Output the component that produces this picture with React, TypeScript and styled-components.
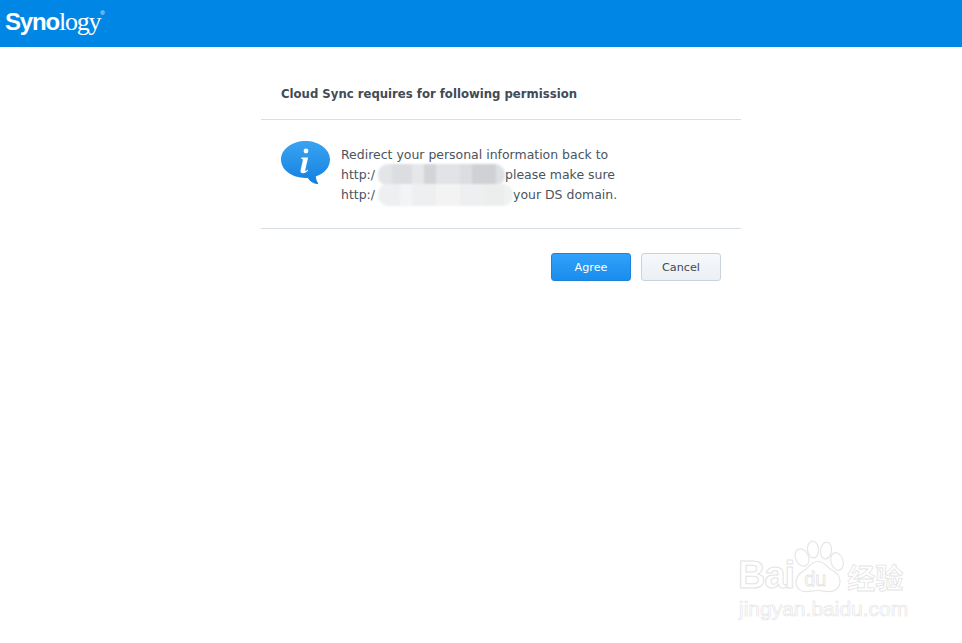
import React from "react";
import styled, { createGlobalStyle } from "styled-components";

const GlobalStyle = createGlobalStyle`
  html, body { margin: 0; padding: 0; background: #fff; }
  body { font-family: "DejaVu Sans", Verdana, sans-serif; overflow: hidden; }
`;

const smudgeTop = [
  ["#e4e5e8", 14], ["#dcdde1", 20], ["#e6e7e9", 12], ["#d3d4d7", 12], ["#e2e3e6", 24], ["#dcdde0", 12], ["#d0d1d4", 24], ["#dfe0e3", 9],
] as const;
const smudgeBottom = [
  ["#eeeff1", 22], ["#f3f4f5", 12], ["#eeeff1", 24], ["#f3f3f4", 24], ["#eeeff1", 24], ["#eceded", 20], ["#f0f1f2", 9],
] as const;

const InfoIcon = () => (
  <svg width="49" height="44" viewBox="0 0 49 44">
    <defs>
      <linearGradient id="bubble" x1="0" y1="0" x2="0" y2="1">
        <stop offset="0" stopColor="#3aa4f2" />
        <stop offset="1" stopColor="#1380df" />
      </linearGradient>
    </defs>
    <path
      d="M24.5 0C11 0 0 8.2 0 18.6 0 29 11 37 24.5 37c.8 0 1.6 0 2.4-.1 1.6 2.6 4.4 5.4 9.4 6.2.8.1 1.2-.6.7-1.2-1.3-1.6-2-3.6-2.1-6.6C43 33 49 26.5 49 18.6 49 8.2 38 0 24.5 0Z"
      fill="url(#bubble)"
    />
    <circle cx="25" cy="10" r="2.4" fill="#fff" />
    <path
      d="M20.5 16.5h6.6l-2.8 12.6c-.2.9.4 1.1 1 .6l1.4-1.1.5.6c-1.5 1.8-3.2 3-5.2 3-2 0-2.8-1.2-2.4-3l2.2-10c.2-1-.2-1.3-1.6-1.5Z"
      fill="#fff"
    />
  </svg>
);

const Paw = () => (
  <svg viewBox="0 0 52 53" fill="#fff" stroke="#e6e6e6" strokeWidth="1.2">
    <ellipse cx="9" cy="17" rx="6.5" ry="9" transform="rotate(-25 9 17)" />
    <ellipse cx="20" cy="9" rx="5.5" ry="8.5" transform="rotate(-6 20 9)" />
    <ellipse cx="33" cy="10" rx="5.5" ry="8.5" transform="rotate(8 33 10)" />
    <ellipse cx="44" cy="21" rx="6" ry="9" transform="rotate(-18 44 21)" />
    <path d="M25 21c6 0 8 5 13 8 6 3 9 7 9 12 0 7-6 11-13 10-4-.5-6-1-9-1s-6 .5-10 1c-7 1-12-3-12-9 0-5 3-9 8-12 5-3 7-9 14-9Z" />
  </svg>
);

export default function App() {
  return (
    <Page>
      <GlobalStyle />
      <TopBar>
        <Logo>
          <LogoBold>Syno</LogoBold>
          <LogoLight>logy</LogoLight>
          <LogoMark>®</LogoMark>
        </Logo>
      </TopBar>
      <Dialog>
        <DialogTitle>Cloud Sync requires for following permission</DialogTitle>
        <DialogBody>
          <InfoIcon />
          <Message>
            <Line>Redirect your personal information back to</Line>
            <Line>
              http:/
              <Smudge $width={127}>
                {smudgeTop.map(([color, width], i) => (
                  <SmudgeCell key={i} $color={color} $width={width} />
                ))}
              </Smudge>
              please make sure
            </Line>
            <Line>
              http:/
              <Smudge $width={135}>
                {smudgeBottom.map(([color, width], i) => (
                  <SmudgeCell key={i} $color={color} $width={width} />
                ))}
              </Smudge>
              your DS domain.
            </Line>
          </Message>
        </DialogBody>
        <DialogFooter>
          <PrimaryButton>Agree</PrimaryButton>
          <SecondaryButton>Cancel</SecondaryButton>
        </DialogFooter>
      </Dialog>
      <Watermark>
        <WatermarkTop>
          <WatermarkWord>Bai</WatermarkWord>
          <PawBox>
            <Paw />
            <PawText>du</PawText>
          </PawBox>
          <WatermarkCjk>经验</WatermarkCjk>
        </WatermarkTop>
        <WatermarkUrl>jingyan.baidu.com</WatermarkUrl>
      </Watermark>
    </Page>
  );
}

// STYLED COMPONENTS //
const Page = styled.div`
  position: relative;
  width: 962px;
  height: 643px;
  background: #fff;
  overflow: hidden;
`;
const TopBar = styled.header`
  height: 47px;
  background: #0086e5;
  display: flex;
  align-items: center;
  padding-left: 5px;
`;
const Logo = styled.div`
  display: flex;
  align-items: baseline;
  color: #fff;
  margin-top: -3px;
`;
const LogoBold = styled.span`
  font-family: "Liberation Sans", Arial, sans-serif;
  font-weight: 700;
  font-size: 24px;
  letter-spacing: -1.2px;
`;
const LogoLight = styled.span`
  font-family: "Liberation Serif", "Times New Roman", serif;
  font-size: 26px;
  letter-spacing: -1.2px;
`;
const LogoMark = styled.span`
  font-family: "Liberation Sans", Arial, sans-serif;
  font-size: 6px;
  align-self: flex-start;
  margin-top: 3px;
`;
const Dialog = styled.main`
  width: 480px;
  margin-left: 261px;
  color: #414b55;
`;
const DialogTitle = styled.h1`
  margin: 0;
  height: 73px;
  box-sizing: border-box;
  padding: 39px 0 0 20px;
  font-size: 11.7px;
  line-height: 17px;
  font-weight: 700;
  border-bottom: 1px solid #d7dfe7;
`;
const DialogBody = styled.section`
  height: 109px;
  box-sizing: border-box;
  padding: 21px 20px 0;
  display: flex;
  gap: 11px;
  border-bottom: 1px solid #d7dfe7;
`;
const Message = styled.div`
  font-size: 12.48px;
  line-height: 20px;
  margin-top: 4px;
  color: #4a545e;
`;
const Line = styled.div`
  display: flex;
  white-space: pre;
`;
const Smudge = styled.div<{ $width: number }>`
  width: ${(p) => p.$width}px;
  height: 22px;
  margin: -1px 0 -1px 3px;
  flex: none;
  display: flex;
  overflow: hidden;
  border-radius: 10px;
  filter: blur(1px);
`;
const SmudgeCell = styled.div<{ $color: string; $width: number }>`
  width: ${(p) => p.$width}px;
  background: ${(p) => p.$color};
`;
const DialogFooter = styled.footer`
  display: flex;
  justify-content: flex-end;
  gap: 10px;
  padding: 24px 20px 0;
`;
const Button = styled.button`
  width: 80px;
  height: 28px;
  box-sizing: border-box;
  border-radius: 3px;
  font-family: inherit;
  font-size: 11.2px;
  padding: 0;
`;
const PrimaryButton = styled(Button)`
  color: #fff;
  border: 1px solid #1a83dc;
  background: linear-gradient(#30a2fb, #1a8cec);
`;
const SecondaryButton = styled(Button)`
  color: #414b55;
  border: 1px solid #c8d3de;
  background: linear-gradient(#f6f8fb, #ebf0f5);
`;
const Watermark = styled.aside`
  position: absolute;
  left: 738px;
  top: 539px;
  width: 180px;
  color: #fff;
`;
const WatermarkTop = styled.div`
  display: flex;
  align-items: flex-end;
  height: 55px;
`;
const WatermarkWord = styled.span`
  font-family: "Liberation Sans", Arial, sans-serif;
  font-weight: 700;
  font-size: 38px;
  line-height: 38px;
  letter-spacing: -1px;
  -webkit-text-stroke: 1px #e4e4e4;
`;
const PawBox = styled.div`
  position: relative;
  width: 52px;
  height: 54px;
  margin-left: -1px;
  svg { width: 52px; height: 54px; display: block; }
`;
const PawText = styled.span`
  position: absolute;
  left: 11px;
  bottom: 3px;
  font-family: "Liberation Sans", Arial, sans-serif;
  font-size: 20px;
  line-height: 24px;
  -webkit-text-stroke: 0.8px #e4e4e4;
`;
const WatermarkCjk = styled.span`
  font-family: "Noto Sans CJK SC", sans-serif;
  font-weight: 700;
  font-size: 28px;
  line-height: 34px;
  margin-left: 2px;
  -webkit-text-stroke: 0.8px #e4e4e4;
`;
const WatermarkUrl = styled.div`
  font-family: "Liberation Sans", Arial, sans-serif;
  font-size: 21px;
  line-height: 24px;
  margin-top: 3px;
  margin-left: 1px;
  -webkit-text-stroke: 0.7px #e6e6e6;
`;
